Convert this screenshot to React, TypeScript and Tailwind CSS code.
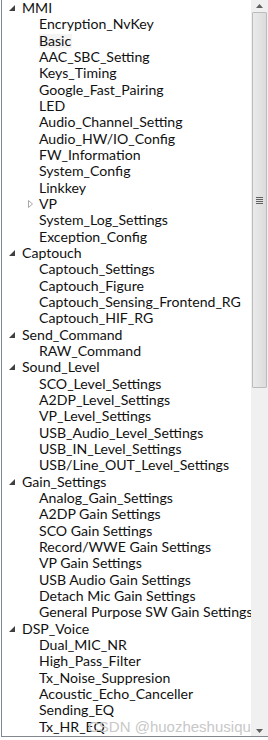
import React from 'react';

type Node = { label: string; children?: string[] };

const tree: Node[] = [
  {
    label: 'MMI',
    children: [
      'Encryption_NvKey',
      'Basic',
      'AAC_SBC_Setting',
      'Keys_Timing',
      'Google_Fast_Pairing',
      'LED',
      'Audio_Channel_Setting',
      'Audio_HW/IO_Config',
      'FW_Information',
      'System_Config',
      'Linkkey',
      '>VP',
      'System_Log_Settings',
      'Exception_Config',
    ],
  },
  {
    label: 'Captouch',
    children: ['Captouch_Settings', 'Captouch_Figure', 'Captouch_Sensing_Frontend_RG', 'Captouch_HIF_RG'],
  },
  { label: 'Send_Command', children: ['RAW_Command'] },
  {
    label: 'Sound_Level',
    children: [
      'SCO_Level_Settings',
      'A2DP_Level_Settings',
      'VP_Level_Settings',
      'USB_Audio_Level_Settings',
      'USB_IN_Level_Settings',
      'USB/Line_OUT_Level_Settings',
    ],
  },
  {
    label: 'Gain_Settings',
    children: [
      'Analog_Gain_Settings',
      'A2DP Gain Settings',
      'SCO Gain Settings',
      'Record/WWE Gain Settings',
      'VP Gain Settings',
      'USB Audio Gain Settings',
      'Detach Mic Gain Settings',
      'General Purpose SW Gain Settings',
    ],
  },
  {
    label: 'DSP_Voice',
    children: [
      'Dual_MIC_NR',
      'High_Pass_Filter',
      'Tx_Noise_Suppresion',
      'Acoustic_Echo_Canceller',
      'Sending_EQ',
      'Tx_HR_EQ',
    ],
  },
];

function Expanded() {
  return (
    <svg width="6" height="6" viewBox="0 0 6 6" className="shrink-0">
      <path d="M6 0 L6 6 L0 6 Z" fill="#404040" />
    </svg>
  );
}

function Collapsed() {
  return (
    <svg width="5" height="8" viewBox="0 0 5 8" className="shrink-0">
      <path d="M0.5 0.5 L4.5 4 L0.5 7.5 Z" fill="none" stroke="#a6a6a6" strokeWidth="1" />
    </svg>
  );
}

export default function App() {
  return (
    <div className="w-[268px] h-[740px] bg-white overflow-hidden relative" style={{ fontFamily: 'Lato, "Liberation Sans", sans-serif' }}>
      <div className="absolute inset-0 border-l border-b border-[#828790] ml-[1px] mb-[3px]" />
      <div className="flex h-[737px] ml-[2px]">
        <div className="flex-1 overflow-hidden text-[14.1px] text-[#111] whitespace-nowrap">
          {tree.map((n) => (
            <div key={n.label}>
              <div className="h-[16.34px] flex items-center leading-none">
                <div className="w-[20px] shrink-0 flex justify-end pr-[7px]">
                  <Expanded />
                </div>
                <span>{n.label}</span>
              </div>
              {n.children?.map((c) => {
                const col = c.startsWith('>');
                const text = col ? c.slice(1) : c;
                return (
                  <div key={c} className="h-[16.34px] flex items-center leading-none">
                    <div className="w-[37px] shrink-0 flex justify-end pr-[6px]">{col && <Collapsed />}</div>
                    <span className={text === 'Basic' ? 'bg-[#f4f4f4] pr-[1px]' : ''}>{text}</span>
                  </div>
                );
              })}
            </div>
          ))}
        </div>
        <div className="w-[17px] shrink-0 bg-[#f0f0f0] flex flex-col items-center">
          <div className="h-[12px] flex items-center justify-center">
            <svg width="7" height="4" viewBox="0 0 7 4">
              <path d="M0 4 L3.5 0 L7 4 Z" fill="#606060" />
            </svg>
          </div>
          <div className="w-[15px] h-[376px] border border-[#bcbcbc] rounded-[1px] bg-gradient-to-r from-[#eaeaea] to-[#dcdcdc] flex items-center justify-center">
            <div className="flex flex-col gap-[1px]">
              <div className="w-[7px] h-[1px] bg-[#606060]" />
              <div className="w-[7px] h-[1px] bg-[#606060]" />
              <div className="w-[7px] h-[1px] bg-[#606060]" />
              <div className="w-[7px] h-[1px] bg-[#606060]" />
            </div>
          </div>
          <div className="flex-1" />
          <div className="h-[12px] flex items-center justify-center">
            <svg width="7" height="4" viewBox="0 0 7 4">
              <path d="M0 0 L7 0 L3.5 4 Z" fill="#606060" />
            </svg>
          </div>
        </div>
      </div>
      <div className="absolute left-[88px] top-[719px] text-[15px] text-[#c8c8c8] leading-none whitespace-nowrap" style={{ fontFamily: '"Liberation Sans", Arial, sans-serif' }}>
        CSDN @huozheshusiqu
      </div>
    </div>
  );
}
